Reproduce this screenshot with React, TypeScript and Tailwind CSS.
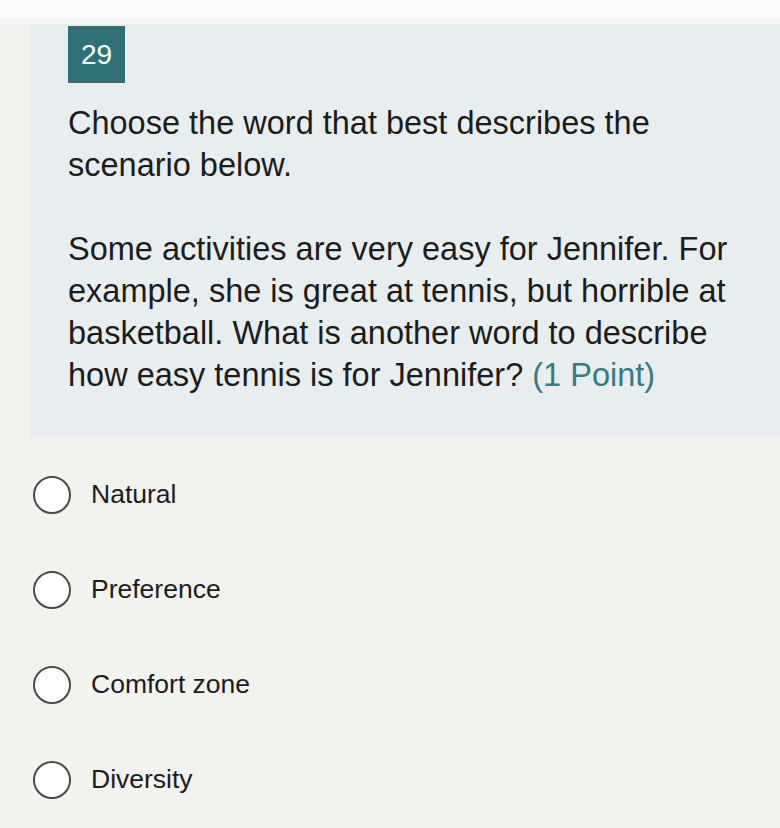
export default function App() {
  const options = ["Natural", "Preference", "Comfort zone", "Diversity"];
  return (
    <div className="w-[780px] h-[828px] bg-[#f2f2ef] overflow-hidden" style={{ fontFamily: '"Liberation Sans", Arial, sans-serif' }}>
      <div className="h-[18px] bg-[#fbfbfb]" />
      <div className="h-[6px] bg-[#f4f5f4]" />
      <div className="ml-[30px] bg-[#e8eef0] pl-[38px] pt-[2px] h-[413px]">
        <div className="w-[57px] h-[57px] bg-[#2f7177] text-white text-[28px] flex items-center justify-center">29</div>
        <div className="mt-[19px] w-[680px] text-[32.5px] leading-[42px] text-[#1c1c1c]">
          <p>Choose the word that best describes the scenario below.</p>
          <p className="mt-[42px]">
            Some activities are very easy for Jennifer. For example, she is great at tennis, but horrible at basketball. What is another word to describe how easy tennis is for Jennifer? <span className="text-[#357b80]">(1 Point)</span>
          </p>
        </div>
      </div>
      <div className="pt-[39px] flex flex-col gap-[57px]">
        {options.map((o) => (
          <div key={o} className="flex items-center h-[38px] pl-[33px]">
            <div className="w-[38px] h-[38px] rounded-full border-2 border-[#4a4a4a] bg-white" />
            <span className="ml-[20px] text-[26.5px] text-[#1c1c1c]">{o}</span>
          </div>
        ))}
      </div>
    </div>
  );
}
